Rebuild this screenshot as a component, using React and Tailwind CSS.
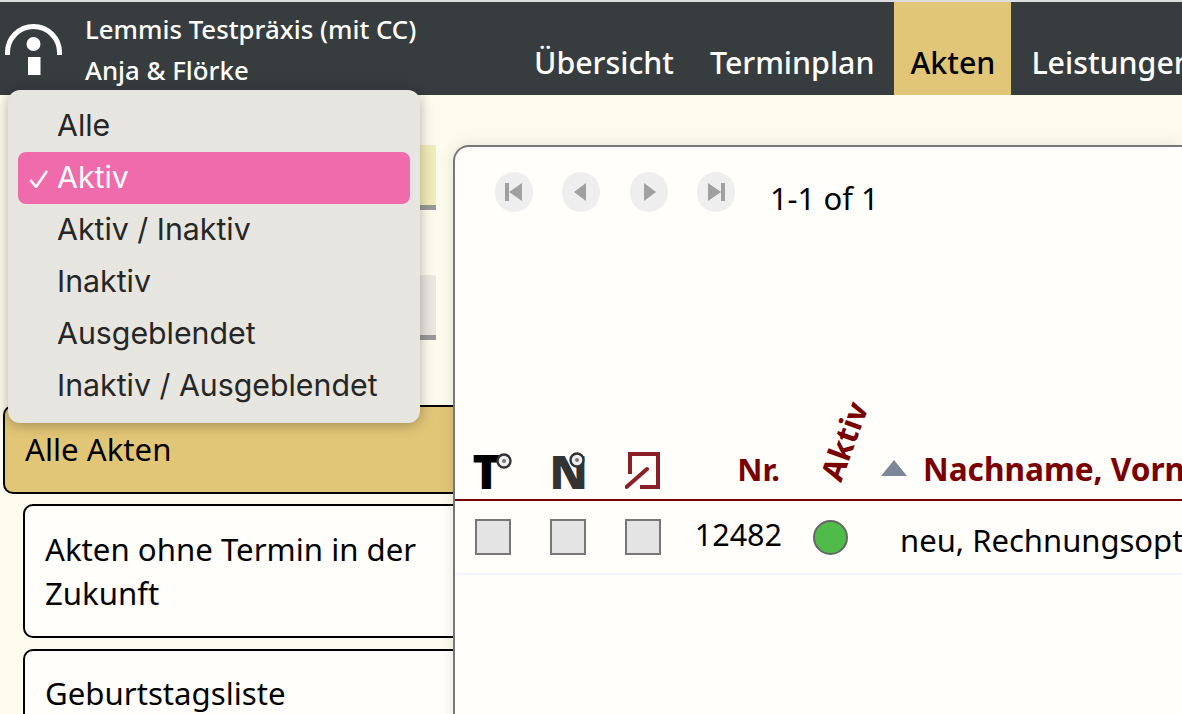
const menuItems = ["Alle", "Aktiv", "Aktiv / Inaktiv", "Inaktiv", "Ausgeblendet", "Inaktiv / Ausgeblendet"];

const navItems = ["Übersicht", "Terminplan", "Akten", "Leistungen"];

function Logo() {
  return (
    <svg width="80" height="93" viewBox="0 0 80 93" className="shrink-0 blur-[0.5px]">
      <path d="M7.5 53V50.5A26 26 0 0 1 59.5 50.5V53" fill="none" stroke="#fff" strokeWidth="5" />
      <circle cx="33.5" cy="42" r="7" fill="#fff" />
      <rect x="28" y="55" width="12.5" height="18" fill="#fff" />
    </svg>
  );
}

function PagerButton({ children }) {
  return (
    <div className="w-[38px] h-[40px] rounded-full bg-[#eeeeee] flex items-center justify-center">
      <svg width="24" height="24" viewBox="0 0 24 24" fill="#a0a0a0" className="blur-[0.5px]">
        {children}
      </svg>
    </div>
  );
}

function Pager() {
  return (
    <div className="flex items-center h-[40px] pl-[40px] mt-[25px]">
      <div className="flex gap-[29.3px]">
        <PagerButton>
          <rect x="3" y="3" width="4" height="18" />
          <path d="M20 3v18L7 12z" />
        </PagerButton>
        <PagerButton>
          <path d="M17 3v18L5 12z" />
        </PagerButton>
        <PagerButton>
          <path d="M7 3v18l12-9z" />
        </PagerButton>
        <PagerButton>
          <rect x="17" y="3" width="4" height="18" />
          <path d="M4 3v18l13-9z" />
        </PagerButton>
      </div>
      <span className="ml-[35px] text-[31px] text-black relative top-[6px]">1-1 of 1</span>
    </div>
  );
}

function CircleMark() {
  return (
    <svg width="16" height="16" viewBox="0 0 16 16" className="absolute">
      <circle cx="8" cy="8" r="6.5" fill="#eee" stroke="#333" strokeWidth="2.4" />
      <circle cx="8" cy="8" r="2" fill="#777" />
    </svg>
  );
}

function Checkbox() {
  return <div className="w-[36px] h-[36px] bg-[#e4e4e4] border-[2px] border-[#777]" />;
}

function TableHeader() {
  return (
    <div className="flex items-end h-[130px] mt-[159px] border-b-[2px] border-[#7a0000] text-[#7a0000] font-bold text-[31px]">
      <div className="w-[75px] h-[50px] shrink-0 flex justify-center">
        <div className="relative w-[42px] h-[40px]">
          <span className="absolute left-[1px] top-[-10px] text-[47px] font-black text-black leading-[64px]">T</span>
          <div className="absolute left-[24px] top-[4px]"><CircleMark /></div>
        </div>
      </div>
      <div className="w-[75px] h-[50px] shrink-0 flex justify-center">
        <div className="relative w-[38px] h-[40px]">
          <span className="absolute left-[1px] top-[-10px] text-[46px] font-black text-[#333] leading-[64px]">N</span>
          <div className="absolute left-[20px] top-[3px]"><CircleMark /></div>
        </div>
      </div>
      <div className="w-[75px] h-[50px] shrink-0 flex justify-center pt-[3px]">
        <svg width="36" height="38" viewBox="0 0 36 38" fill="none" stroke="#8a1f27" strokeWidth="4" className="blur-[0.4px]">
          <path d="M5 22V2h28v33H15" />
          <path d="M1.5 35L22 17" strokeLinecap="round" />
        </svg>
      </div>
      <div className="w-[107px] h-[50px] shrink-0 text-right pr-[7px] leading-[40px]">Nr.</div>
      <div className="w-[86px] h-[50px] shrink-0 relative">
        <span className="absolute left-[16px] top-[-28px] -rotate-[70deg] leading-[40px]">Aktiv</span>
      </div>
      <div className="h-[50px] shrink-0 pl-[8px] pt-[11px]">
        <svg width="26" height="16" viewBox="0 0 26 16">
          <path d="M13 0l13 16H0z" fill="#7c8798" />
        </svg>
      </div>
      <div className="h-[50px] pl-[16px] text-[31.6px] leading-[40px] whitespace-nowrap">Nachname, Vorname</div>
    </div>
  );
}

function TableRow() {
  return (
    <div className="flex items-center h-[74px] border-b-[2px] border-[#f3f5fd] text-[31px] text-black">
      <div className="w-[75px] shrink-0 flex justify-center"><Checkbox /></div>
      <div className="w-[75px] shrink-0 flex justify-center"><Checkbox /></div>
      <div className="w-[75px] shrink-0 flex justify-center"><Checkbox /></div>
      <div className="w-[107px] shrink-0 text-right pr-[5px] text-[30.5px] pb-[4px]">12482</div>
      <div className="w-[86px] shrink-0 flex justify-center">
        <div className="w-[35px] h-[35px] rounded-full bg-[#4fbb48] border-[2px] border-[#666]" />
      </div>
      <div className="pl-[27px] pt-[6px] whitespace-nowrap">neu, Rechnungsoptionen</div>
    </div>
  );
}

function Sidebar() {
  return (
    <div className="w-[453px] shrink-0 pt-[50px] flex flex-col text-[31.2px] text-black">
      <div className="ml-[300px] w-[136px] h-[65px] shrink-0 bg-[#f1edb9] border-b-[5px] border-[#999]" />
      <div className="ml-[300px] w-[136px] h-[65px] mt-[65px] shrink-0 bg-[#e9e7df] border-b-[5px] border-[#999]" />
      <div className="ml-[3px] w-[460px] h-[89px] mt-[65px] shrink-0 bg-[#e2c677] border-[2px] border-black rounded-[10px] pl-[20px] flex items-center">
        Alle Akten
      </div>
      <div className="ml-[23px] w-[440px] h-[134px] mt-[10px] shrink-0 bg-[#fffefa] border-[2px] border-black rounded-[10px] pl-[20px] pr-[30px] flex items-center leading-[44px]">
        Akten ohne Termin in der Zukunft
      </div>
      <div className="ml-[23px] w-[440px] h-[89px] mt-[11px] shrink-0 bg-[#fffefa] border-[2px] border-black rounded-[10px] pl-[20px] flex items-center">
        Geburtstagsliste
      </div>
    </div>
  );
}

function StatusMenu() {
  return (
    <div className="absolute left-[8px] top-[90px] w-[412px] pt-[10px] pb-[11px] px-[10px] bg-[#e6e5df] rounded-[12px] shadow-[0_2px_14px_rgba(0,0,0,0.3)] font-['Inter',sans-serif] text-[30.3px] text-[#262626] z-20">
      {menuItems.map((item) =>
        item === "Aktiv" ? (
          <div key={item} className="relative h-[52px] pl-[39px] flex items-center bg-[#ef6bac] rounded-[8px] text-white">
            <svg width="19" height="18" viewBox="0 0 19 18" className="absolute left-[11px] top-[18px]" fill="none" stroke="#fff" strokeWidth="2.6">
              <path d="M1.5 10l5.5 7L18 1" />
            </svg>
            {item}
          </div>
        ) : (
          <div key={item} className="h-[52px] pl-[39px] flex items-center">{item}</div>
        )
      )}
    </div>
  );
}

export default function App() {
  return (
    <div className="relative w-[1182px] h-[714px] overflow-hidden bg-[#fdfbee] font-['Noto_Sans',sans-serif]">
      <div className="h-[2px] bg-[#dddddd]" />
      <header className="flex h-[93px] bg-[#373c3f] text-white overflow-hidden">
        <Logo />
        <div className="w-[433px] shrink-0 ml-[5px] pt-[7px] text-[25.8px] font-medium leading-[41px] whitespace-nowrap">
          <div>Lemmis Testpräxis (mit CC)</div>
          <div>Anja &amp; Flörke</div>
        </div>
        <nav className="flex gap-[4px] text-[30.35px] font-medium whitespace-nowrap">
          {navItems.map((item) => (
            <div key={item} className={`px-[16px] pt-[40px] leading-[42px] ${item === "Akten" ? "bg-[#e2c677] text-black" : ""}`}>
              {item}
            </div>
          ))}
        </nav>
      </header>
      <main className="flex h-[619px]">
        <Sidebar />
        <section className="relative z-10 flex-1 mt-[50px] -mb-[50px] bg-[#fffefa] border-l-[2px] border-t-[2px] border-[#777] rounded-tl-[16px] shadow-[0_0_16px_rgba(0,0,0,0.1)] overflow-hidden">
          <Pager />
          <TableHeader />
          <TableRow />
        </section>
      </main>
      <StatusMenu />
    </div>
  );
}
